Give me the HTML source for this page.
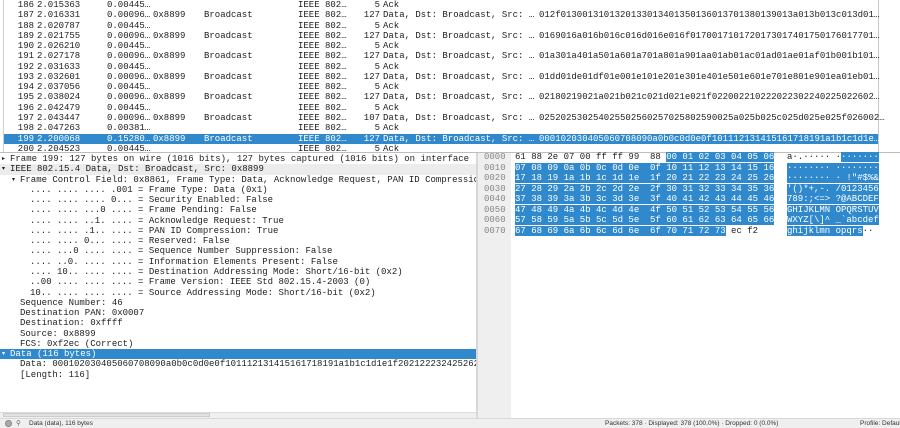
<!DOCTYPE html>
<html><head><meta charset="utf-8"><style>
*{margin:0;padding:0;box-sizing:border-box}
body{width:900px;height:428px;overflow:hidden;background:#fff;font-family:"Liberation Mono",monospace;font-size:9px;color:#1e1e1e;position:relative}
.r{position:absolute;left:0;height:10.27px;line-height:10.27px;white-space:pre;width:878px}
.c{position:absolute;top:0}
.sel{background:#3089cc;color:#fff}
.d{position:absolute;left:0;width:476px;height:10.27px;line-height:10.27px;white-space:pre}
.h{position:absolute;left:0;height:10.5px;line-height:10.5px;white-space:pre}
.b{background:#3089cc;color:#fff}
</style></head><body>
<div style="position:absolute;left:3px;top:0;width:1px;height:152px;background:#cfcfcf"></div>
<div style="position:absolute;left:878px;top:0;width:1px;height:152px;background:#c8c8c8"></div>
<div id="pl" style="position:absolute;left:0;top:0;width:900px;height:152px;overflow:hidden"></div>
<div style="position:absolute;left:0;top:152px;width:900px;height:1px;background:#bdbdbd"></div>
<div style="position:absolute;left:476px;top:153px;width:2px;height:265px;background:#d8d8d8"></div>
<div id="dt"></div>
<div style="position:absolute;left:0;top:412px;width:476px;height:6px;background:#f0f0f0;border-top:1px solid #ddd"></div>
<div style="position:absolute;left:3px;top:413px;width:207px;height:4px;background:#e2e2e2;border:1px solid #ccc"></div>
<div style="position:absolute;left:478px;top:153px;width:33px;height:265px;background:#efefef"></div>
<div id="hx"></div>
<div style="position:absolute;left:0;top:418px;width:900px;height:10px;background:#efefef;border-top:1px solid #d8d8d8;font-family:'Liberation Sans',sans-serif;font-size:6.5px;line-height:9px;color:#333;white-space:nowrap">
<span style="position:absolute;left:5px;top:1px;width:7px;height:7px;border-radius:50%;background:#aaa;border:1px solid #888"></span>
<span style="position:absolute;left:16px;top:0;color:#667">⚲</span>
<span style="position:absolute;left:29px;top:0">Data (data), 116 bytes</span>
<span style="position:absolute;left:605px;top:0">Packets: 378 · Displayed: 378 (100.0%) · Dropped: 0 (0.0%)</span>
<span style="position:absolute;left:860px;top:0">Profile: Default</span>
</div>
<script>
var rows=[
["186","2.015363","0.00445…","","","5","Ack",""],
["187","2.016331","0.00096…","0x8899","Broadcast","127","Data, Dst: Broadcast, Src: …","012f0130013101320133013401350136013701380139013a013b013c013d01…"],
["188","2.020787","0.00445…","","","5","Ack",""],
["189","2.021755","0.00096…","0x8899","Broadcast","127","Data, Dst: Broadcast, Src: …","0169016a016b016c016d016e016f0170017101720173017401750176017701…"],
["190","2.026210","0.00445…","","","5","Ack",""],
["191","2.027178","0.00096…","0x8899","Broadcast","127","Data, Dst: Broadcast, Src: …","01a301a401a501a601a701a801a901aa01ab01ac01ad01ae01af01b001b101…"],
["192","2.031633","0.00445…","","","5","Ack",""],
["193","2.032601","0.00096…","0x8899","Broadcast","127","Data, Dst: Broadcast, Src: …","01dd01de01df01e001e101e201e301e401e501e601e701e801e901ea01eb01…"],
["194","2.037056","0.00445…","","","5","Ack",""],
["195","2.038024","0.00096…","0x8899","Broadcast","127","Data, Dst: Broadcast, Src: …","02180219021a021b021c021d021e021f022002210222022302240225022602…"],
["196","2.042479","0.00445…","","","5","Ack",""],
["197","2.043447","0.00096…","0x8899","Broadcast","107","Data, Dst: Broadcast, Src: …","025202530254025502560257025802590025a025b025c025d025e025f026002…"],
["198","2.047263","0.00381…","","","5","Ack",""],
["199","2.200068","0.15280…","0x8899","Broadcast","127","Data, Dst: Broadcast, Src: …","000102030405060708090a0b0c0d0e0f101112131415161718191a1b1c1d1e…"],
["200","2.204523","0.00445…","","","5","Ack",""]];
var h="";
rows.forEach(function(r,i){
h+='<div class="r'+(i==13?' sel':'')+'" style="top:'+(i*10.27)+'px;left:4px;width:874px">'+
'<span class="c" style="right:'+(874-30)+'px">'+r[0]+'</span>'+
'<span class="c" style="left:33px">'+r[1]+'</span>'+
'<span class="c" style="left:103px">'+r[2]+'</span>'+
'<span class="c" style="left:149px">'+r[3]+'</span>'+
'<span class="c" style="left:200px">'+r[4]+'</span>'+
'<span class="c" style="left:294px">IEEE 802…</span>'+
'<span class="c" style="right:'+(874-376)+'px">'+r[5]+'</span>'+
'<span class="c" style="left:379px">'+r[6]+'</span>'+
'<span class="c" style="left:535px">'+r[7]+'</span></div>';
});
document.getElementById('pl').innerHTML=h;
var d=[
[2,"▸","Frame 199: 127 bytes on wire (1016 bits), 127 bytes captured (1016 bits) on interface -,"],
[2,"▾","IEEE 802.15.4 Data, Dst: Broadcast, Src: 0x8899"],
[12,"▾","Frame Control Field: 0x8861, Frame Type: Data, Acknowledge Request, PAN ID Compression"],
[30,"",".... .... .... .001 = Frame Type: Data (0x1)"],
[30,"",".... .... .... 0... = Security Enabled: False"],
[30,"",".... .... ...0 .... = Frame Pending: False"],
[30,"",".... .... ..1. .... = Acknowledge Request: True"],
[30,"",".... .... .1.. .... = PAN ID Compression: True"],
[30,"",".... .... 0... .... = Reserved: False"],
[30,"",".... ...0 .... .... = Sequence Number Suppression: False"],
[30,"",".... ..0. .... .... = Information Elements Present: False"],
[30,"",".... 10.. .... .... = Destination Addressing Mode: Short/16-bit (0x2)"],
[30,"","..00 .... .... .... = Frame Version: IEEE Std 802.15.4-2003 (0)"],
[30,"","10.. .... .... .... = Source Addressing Mode: Short/16-bit (0x2)"],
[20,"","Sequence Number: 46"],
[20,"","Destination PAN: 0x0007"],
[20,"","Destination: 0xffff"],
[20,"","Source: 0x8899"],
[20,"","FCS: 0xf2ec (Correct)"],
[2,"▾","Data (116 bytes)"],
[20,"","Data: 000102030405060708090a0b0c0d0e0f101112131415161718191a1b1c1d1e1f2021222324252627"],
[20,"","[Length: 116]"]];
h="";
d.forEach(function(r,i){
var st=i==19?' b':'';var bg=i==1?'background:#ececec;':'';
var t=r[1]?'<span style="position:absolute;left:'+r[0]+'px;font-size:6px">'+r[1]+'</span><span style="position:absolute;left:'+(r[0]+8)+'px">':'<span style="position:absolute;left:'+r[0]+'px">';
h+='<div class="d'+st+'" style="'+bg+'top:'+(154+i*10.27)+'px;overflow:hidden">'+t+r[2].replace(/&/g,'&amp;').replace(/</g,'&lt;')+'</span></div>';
});
document.getElementById('dt').innerHTML=h;
var hx=[
["61 88 2e 07 00 ff ff 99  88 ","00 01 02 03 04 05 06","","a·.····· ·","·······",""],
["","07 08 09 0a 0b 0c 0d 0e  0f 10 11 12 13 14 15 16","","","········ ········",""],
["","17 18 19 1a 1b 1c 1d 1e  1f 20 21 22 23 24 25 26","","","········ · !\"#$%&",""],
["","27 28 29 2a 2b 2c 2d 2e  2f 30 31 32 33 34 35 36","","","'()*+,-. /0123456",""],
["","37 38 39 3a 3b 3c 3d 3e  3f 40 41 42 43 44 45 46","","","789:;<=> ?@ABCDEF",""],
["","47 48 49 4a 4b 4c 4d 4e  4f 50 51 52 53 54 55 56","","","GHIJKLMN OPQRSTUV",""],
["","57 58 59 5a 5b 5c 5d 5e  5f 60 61 62 63 64 65 66","","","WXYZ[\\]^ _`abcdef",""],
["","67 68 69 6a 6b 6c 6d 6e  6f 70 71 72 73"," ec f2","","ghijklmn opqrs","··"]];
function e(s){return s.replace(/&/g,'&amp;').replace(/</g,'&lt;').replace(/>/g,'&gt;')}
h="";
hx.forEach(function(r,i){
var y=152+i*10.57;
h+='<div class="h" style="top:'+y+'px;left:484px;color:#888">00'+i+'0</div>';
h+='<div class="h" style="top:'+y+'px;left:515px">'+e(r[0])+'<span class="b">'+e(r[1])+'</span>'+e(r[2])+'</div>';
h+='<div class="h" style="top:'+y+'px;left:787px">'+e(r[3])+'<span class="b">'+e(r[4])+'</span>'+e(r[5])+'</div>';
});
document.getElementById('hx').innerHTML=h;
</script>
</body></html>
